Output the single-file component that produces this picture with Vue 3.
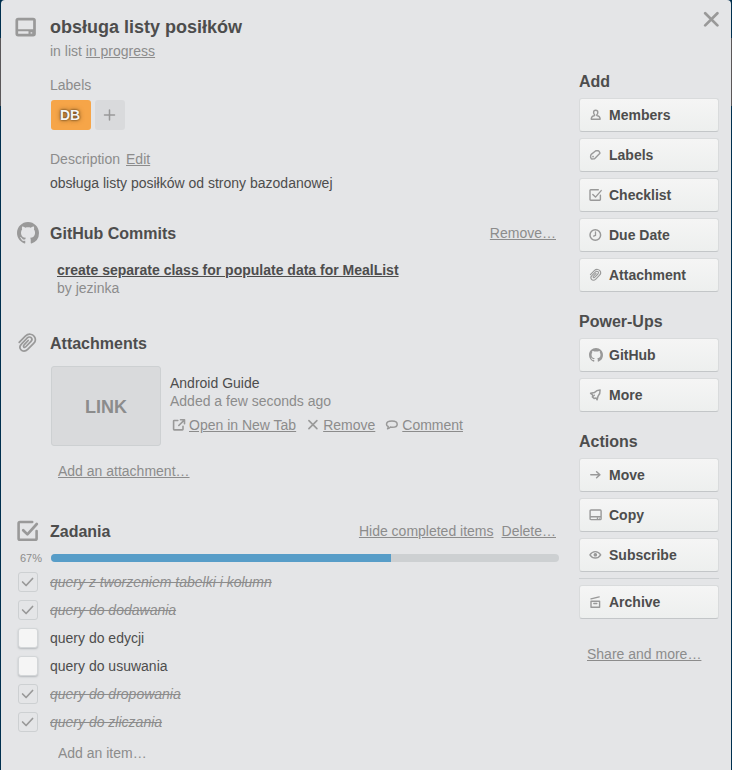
<script setup>
import { computed, h, ref } from 'vue'

const stroke = (d, width = 1.2) => ({ d, fill: 'none', stroke: 'currentColor', 'stroke-width': width, 'stroke-linecap': 'round', 'stroke-linejoin': 'round' })
const solid = (d) => ({ d, fill: 'currentColor', 'fill-rule': 'evenodd' })

const glyphs = {
  card: { box: 14, paths: [stroke('M2 2h9.200q.9 0 .9.9v7.800q0 .9-.9.9h-9.200q-.9 0-.9-.9v-7.800q0-.9.9-.9zM1.500 8.700h10.200', 1.400), solid('M7.800 9.200h1.300v1.900h-1.300zM9.900 9.800h1v1h-1z')] },
  cardLarge: { box: 22, paths: [stroke('M3.200 3.200h14.900q1.400 0 1.400 1.400v13.200q0 1.400-1.400 1.400H3.200q-1.400 0-1.400-1.400V4.600q0-1.400 1.400-1.400z', 2.700), stroke('M2.500 14.300h16.500', 1.900), solid('M13.500 14.300h6v5h-6zM15.600 16.200v1.600h1.600v-1.600z')] },
  member: { box: 14, paths: [stroke('M6.700 2.300c1.300 0 2.100.9 2.100 2.100 0 1-.4 1.800-1 2.300v.9c1.800.2 3.100 1 3.300 2.900v.7H2.300v-.7c.2-1.900 1.500-2.700 3.300-2.900v-.9c-.6-.5-1-1.300-1-2.300 0-1.200.8-2.100 2.100-2.100z', 1.400)] },
  tag: { box: 14, paths: [stroke('M6.800 2.800h2.300q.5 0 .8.400l.9 1.400q.3.5-.1 1l-4.900 4.900q-.4.400-1 .4l-1.900.1q-.5 0-.7-.4l-.5-1.200q-.2-.5-.1-1l.2-1.200q.1-.5.4-.8z', 1.400), solid('M4 7.700a.8.8 0 1 0 .1 0z')] },
  check: { box: 14, paths: [stroke('M9.300 1.800H1.700q-.7 0-.7.700v9q0 .7.700.700h9q.7 0 .7-.7V7.300', 1.400), stroke('M3.800 6.500l2.700 2.600 5.700-6.500', 1.400)] },
  checkLarge: { box: 22, paths: [stroke('M15.200 2H3q-1.400 0-1.400 1.400v15q0 1.400 1.400 1.400h15.200q1.400 0 1.400-1.400v-7.400', 2.600), stroke('M6.200 10.200l4.200 4.200 9.400-10.400', 2.700)] },
  clock: { box: 14, paths: [stroke('M6.300 1.700a5.300 5.300 0 1 1 0 10.600a5.300 5.300 0 1 1 0-10.600z', 1.500), stroke('M6.500 4v3.400l-1.900.7', 1.300)] },
  clip: { box: 14, paths: [stroke('M1.400 6.600l3.900-4c2-1.900 4.600-1.300 5.700.2 1.100 1.600.8 3.200-.4 4.400l-3.800 3.900c-1.500 1.500-3.400 1.300-4.300.2-1-1.200-.7-2.600.3-3.600l3.700-3.900c.9-.9 2.100-.7 2.600-.1.600.7.5 1.600-.2 2.300L5.600 9.400c-.5.5-1 .5-1.300.2-.3-.4-.3-.9.2-1.400l2.600-2.800', 1.100)] },
  github: { box: 16, paths: [solid('M8 0C3.580 0 0 3.580 0 8c0 3.540 2.290 6.530 5.470 7.590.4.070.55-.17.55-.38 0-.19-.01-.82-.01-1.490-2.010.37-2.530-.49-2.690-.94-.09-.23-.48-.94-.82-1.130-.28-.15-.68-.52-.01-.53.63-.01 1.080.58 1.230.82.72 1.210 1.870.87 2.330.66.07-.52.28-.87.51-1.070-1.780-.2-3.640-.89-3.640-3.950 0-.87.31-1.590.82-2.150-.08-.2-.36-1.020.08-2.120 0 0 .67-.21 2.200.82.64-.18 1.320-.27 2-.27s1.360.09 2 .27c1.530-1.040 2.200-.82 2.200-.82.44 1.100.16 1.920.08 2.120.51.56.82 1.270.82 2.150 0 3.070-1.870 3.750-3.650 3.950.29.25.54.73.54 1.480 0 1.070-.01 1.930-.01 2.200 0 .21.15.46.55.38A8.010 8.010 0 0 0 16 8c0-4.420-3.580-8-8-8z')] },
  rocket: { box: 14, paths: [stroke('M11.100 1.900c-2.300 0-4.200.9-5.600 2.600l-3.900.8 2.100 1.700-.3 2 1.700 1.400 2-.4 1 1.800.9-3.600c1.600-1.700 2.300-3.700 2.100-6.300z', 1.500), stroke('M3.800 8.500l1.600-1.300', 1.300)] },
  arrow: { box: 14, paths: [stroke('M1.800 6.800h9M7.600 3.800l3.300 3-3.300 3', 1.500)] },
  eye: { box: 14, paths: [stroke('M.9 6.800c1.500-2.300 3.300-3.200 5.400-3.200s3.900.9 5.400 3.200c-1.500 2.300-3.300 3.200-5.400 3.200S2.400 9.100.9 6.800z', 1.400), solid('M6.300 5a1.800 1.800 0 1 0 .1 0z')] },
  archive: { box: 14, paths: [stroke('M2 3.900l8.200-2M2 6.300h8.600v6H2zM4.800 8.500h3', 1.400)] },
  open: { box: 14, paths: [stroke('M5.800 2.500H2.200q-.6 0-.6.6v8.200q0 .6.6.6h8.200q.6 0 .6-.6V8.200M8.500 1.800h4v4M12.200 2.100L6.800 7.500', 1.600)] },
  cross: { box: 14, paths: [stroke('M2.900 2.600l8 8M10.900 2.600l-8 8', 1.600)] },
  bubble: { box: 14, paths: [stroke('M7 3c3 0 5.200 1.200 5.200 3.200S10 9.300 7.300 9.300c-.8 0-1.400-.1-2-.2-.6.9-1.500 1.500-2.700 1.700.5-.7.7-1.400.6-2.300C2 8 1.500 7.200 1.500 6.200 1.500 4.200 4 3 7 3z', 1.500)] },
  close: { box: 16, paths: [stroke('M2.200 2.200l12.200 12.200M14.400 2.200L2.200 14.400', 2.700)] },
  plus: { box: 14, paths: [stroke('M6.500 2v10M1.500 7h10', 1.500)] },
  tick: { box: 14, paths: [stroke('M1.600 7l3.500 3.500 6.500-7', 1.700)] },
}

const Icon = (props) =>
  h('svg', { viewBox: `0 0 ${glyphs[props.name].box} ${glyphs[props.name].box}`, 'aria-hidden': 'true' },
    glyphs[props.name].paths.map((p) => h('path', p)))
Icon.props = ['name']

const groups = [
  { title: 'Add', items: [
    { icon: 'member', text: 'Members' }, { icon: 'tag', text: 'Labels' }, { icon: 'check', text: 'Checklist' },
    { icon: 'clock', text: 'Due Date' }, { icon: 'clip', text: 'Attachment' }] },
  { title: 'Power-Ups', items: [{ icon: 'github', text: 'GitHub' }, { icon: 'rocket', text: 'More' }] },
  { title: 'Actions', items: [
    { icon: 'arrow', text: 'Move' }, { icon: 'card', text: 'Copy' }, { icon: 'eye', text: 'Subscribe' },
    { icon: 'archive', text: 'Archive', divided: true }] },
]

const tasks = ref([
  { text: 'query z tworzeniem tabelki i kolumn', done: true },
  { text: 'query do dodawania', done: true },
  { text: 'query do edycji', done: false },
  { text: 'query do usuwania', done: false },
  { text: 'query do dropowania', done: true },
  { text: 'query do zliczania', done: true },
])
const percent = computed(() => Math.round((tasks.value.filter((t) => t.done).length / tasks.value.length) * 100))
</script>

<template>
  <div class="page">
    <div class="dialog" role="dialog" aria-labelledby="card-title">
      <header class="top">
        <Icon name="cardLarge" class="icon-lg" />
        <div class="top-text">
          <h1 id="card-title">obsługa listy posiłków</h1>
          <p class="muted">in list <a href="#">in progress</a></p>
        </div>
        <button class="close" type="button" aria-label="Close"><Icon name="close" class="icon-close" /></button>
      </header>

      <main>
        <section class="details">
          <h3>Labels</h3>
          <div class="chips">
            <button type="button" class="chip orange">DB</button>
            <button type="button" class="chip" aria-label="+"><Icon name="plus" class="icon" /></button>
          </div>
          <div class="desc-head"><h3>Description</h3><a href="#">Edit</a></div>
          <p>obsługa listy posiłków od strony bazodanowej</p>
        </section>

        <section class="commits">
          <div class="head">
            <Icon name="github" class="icon-lg" />
            <h2>GitHub Commits</h2>
            <a href="#">Remove…</a>
          </div>
          <div class="commit">
            <a href="#">create separate class for populate data for MealList</a>
            <p class="muted">by jezinka</p>
          </div>
        </section>

        <section class="attachments">
          <div class="head">
            <Icon name="clip" class="icon-lg" />
            <h2>Attachments</h2>
          </div>
          <div class="attachment">
            <a href="#" class="thumb">LINK</a>
            <div class="info">
              <p>Android Guide</p>
              <p class="muted">Added a few seconds ago</p>
              <div class="options">
                <a href="#"><Icon name="open" class="icon" /><span>Open in New Tab</span></a>
                <a href="#"><Icon name="cross" class="icon" /><span>Remove</span></a>
                <a href="#"><Icon name="bubble" class="icon" /><span>Comment</span></a>
              </div>
            </div>
          </div>
          <a href="#" class="add-attachment">Add an attachment…</a>
        </section>

        <section class="checklist">
          <div class="head">
            <Icon name="checkLarge" class="icon-lg" />
            <h2>Zadania</h2>
            <a href="#">Hide completed items</a>
            <a href="#">Delete…</a>
          </div>
          <div class="progress">
            <span class="percent">{{ percent }}%</span>
            <div class="track" role="progressbar" :aria-valuenow="percent" aria-valuemin="0" aria-valuemax="100">
              <div class="fill" :style="{ width: percent + '%' }"></div>
            </div>
          </div>
          <ul>
            <li v-for="(task, i) in tasks" :key="i" :class="{ done: task.done }">
              <span class="box">
                <input :id="'task-' + i" v-model="task.done" type="checkbox" />
                <Icon v-if="task.done" name="tick" class="icon tick" />
              </span>
              <label :for="'task-' + i">{{ task.text }}</label>
            </li>
          </ul>
          <input class="new-item" type="text" placeholder="Add an item…" aria-label="Add an item…" />
        </section>
      </main>

      <aside>
        <section v-for="group in groups" :key="group.title" class="group">
          <h2>{{ group.title }}</h2>
          <template v-for="item in group.items" :key="item.text">
            <hr v-if="item.divided" />
            <button type="button" class="action"><Icon :name="item.icon" class="icon" />{{ item.text }}</button>
          </template>
        </section>
        <a href="#" class="share">Share and more…</a>
      </aside>
    </div>
  </div>
</template>

<style>
body {
  background: #e4e5e7;
}
</style>

<style scoped>
.page {
  min-height: 100vh;
  box-sizing: border-box;
  display: grid;
  padding: 0 1px;
  background: linear-gradient(#00304f 38px, #5a5759 38px, #5a5759 106px, #00304f 106px);
  font: 14px/18px "Liberation Sans", Arial, sans-serif;
  color: #4d4d4d;
}
.dialog {
  display: grid;
  grid-template-columns: minmax(0, 1fr) 140px;
  grid-template-rows: auto 1fr;
  column-gap: 20px;
  row-gap: 12px;
  padding: 15px 12px 8px 16px;
  background: #e4e5e7;
  border-radius: 4px 4px 0 0;
}
h1, h2, h3, p, ul, hr {
  margin: 0;
  padding: 0;
}
h1 {
  font-size: 18px;
  line-height: 24px;
}
h2 {
  font-size: 16px;
  line-height: 20px;
}
h3 {
  font-size: 14px;
  font-weight: normal;
  color: #8c8c8c;
}
a, .muted {
  color: #8c8c8c;
}
button {
  font: inherit;
  border: 0;
  padding: 0;
  cursor: pointer;
}
.icon, .icon-lg, .icon-close {
  display: block;
  flex: none;
  width: 14px;
  height: 14px;
  color: #999;
}
.icon-lg {
  width: 22px;
  height: 22px;
}
.icon-close {
  width: 16px;
  height: 16px;
}
.top {
  grid-column: 1 / -1;
  display: flex;
  align-items: flex-start;
  gap: 13px;
  margin-left: -2px;
}
.top .icon-lg {
  margin-top: 1px;
}
.top-text {
  flex: 1;
  display: grid;
  gap: 3px;
}
.close {
  margin-top: -4px;
  background: none;
}
main {
  padding-top: 4px;
}
.details {
  padding-left: 33px;
}
.chips {
  display: flex;
  gap: 4px;
  margin: 6px 0 20px;
  padding-left: 1px;
}
.chip {
  display: grid;
  place-items: center;
  width: 30px;
  height: 30px;
  border-radius: 3px;
  background: #d9dadc;
}
.chip.orange {
  width: 40px;
  padding-right: 2px;
  background: #f6a548;
  color: #f5f5f5;
  font-weight: bold;
  text-shadow: 0 0 2px #3c2a14, 0 0 5px #7a5424;
}
.desc-head {
  display: flex;
  gap: 6px;
  margin-bottom: 6px;
}
.head {
  display: flex;
  align-items: center;
  gap: 8px;
  height: 32px;
  padding-right: 3px;
}
.head .icon-lg {
  margin-right: 3px;
}
.head h2 {
  flex: 1;
  padding-top: 2px;
}
.commits {
  margin-top: 25px;
}
.commit {
  padding: 12px 0 0 40px;
}
.commit a {
  font-weight: bold;
  color: #4d4d4d;
}
.attachments {
  margin-top: 30px;
}
.attachment {
  display: flex;
  align-items: center;
  gap: 9px;
  margin: 7px 0 16px;
  padding-left: 34px;
}
.info {
  padding-bottom: 4px;
}
.thumb {
  display: grid;
  place-items: center;
  box-sizing: border-box;
  width: 110px;
  height: 80px;
  padding-top: 2px;
  border: 1px solid #cdd0d2;
  border-radius: 3px;
  background: #d9dadc;
  font-size: 18px;
  font-weight: bold;
  text-decoration: none;
}
.options {
  display: flex;
  gap: 10px;
  margin-top: 6px;
  padding-left: 2px;
}
.options a {
  display: flex;
  align-items: center;
  gap: 3px;
  text-decoration: none;
}
.options span {
  text-decoration: underline;
}
.add-attachment {
  display: inline-block;
  margin-left: 41px;
}
.checklist {
  margin-top: 35px;
}
.progress {
  display: flex;
  align-items: center;
  gap: 9px;
  height: 8px;
  margin: 7px 0 6px;
}
.percent {
  width: 25px;
  text-align: right;
  font-size: 11px;
  color: #8c8c8c;
}
.track {
  flex: 1;
  height: 8px;
  border-radius: 4px;
  overflow: hidden;
  background: #cdd0d2;
}
.fill {
  height: 100%;
  background: #579dc8;
}
li {
  display: flex;
  align-items: center;
  gap: 12px;
  height: 28px;
  padding-left: 1px;
}
.box {
  display: grid;
  place-items: center;
}
.box > * {
  grid-area: 1 / 1;
}
.box input {
  appearance: none;
  box-sizing: border-box;
  width: 20px;
  height: 20px;
  margin: 0;
  border: 1px solid #d3d6d8;
  border-radius: 3px;
  background: #f5f5f5;
  box-shadow: 0 1px 2px #b4b8bb;
}
.done .box input {
  border-color: #cdd0d2;
  background: none;
  box-shadow: none;
}
.tick {
  pointer-events: none;
}
.done label {
  color: #8c8c8c;
  font-style: italic;
  text-decoration: line-through;
}
.new-item {
  display: block;
  box-sizing: border-box;
  width: 100%;
  height: 18px;
  margin-top: 8px;
  padding: 0 0 0 41px;
  border: 0;
  background: none;
  font: inherit;
}
.new-item::placeholder {
  color: #8c8c8c;
  opacity: 1;
}
.group {
  display: grid;
  gap: 6px;
  margin-bottom: 20px;
}
hr {
  border: 0;
  border-top: 1px solid #cdd0d2;
}
.action {
  display: flex;
  align-items: center;
  gap: 6px;
  height: 34px;
  padding: 0 9px;
  border: 1px solid #d9dbdc;
  border-bottom-color: #c3c6c8;
  border-radius: 3px;
  background: linear-gradient(#f5f5f5, #edefee);
  font-weight: bold;
  color: #4d4d4d;
}
.share {
  display: inline-block;
  margin: 6px 0 0 8px;
}
</style>
